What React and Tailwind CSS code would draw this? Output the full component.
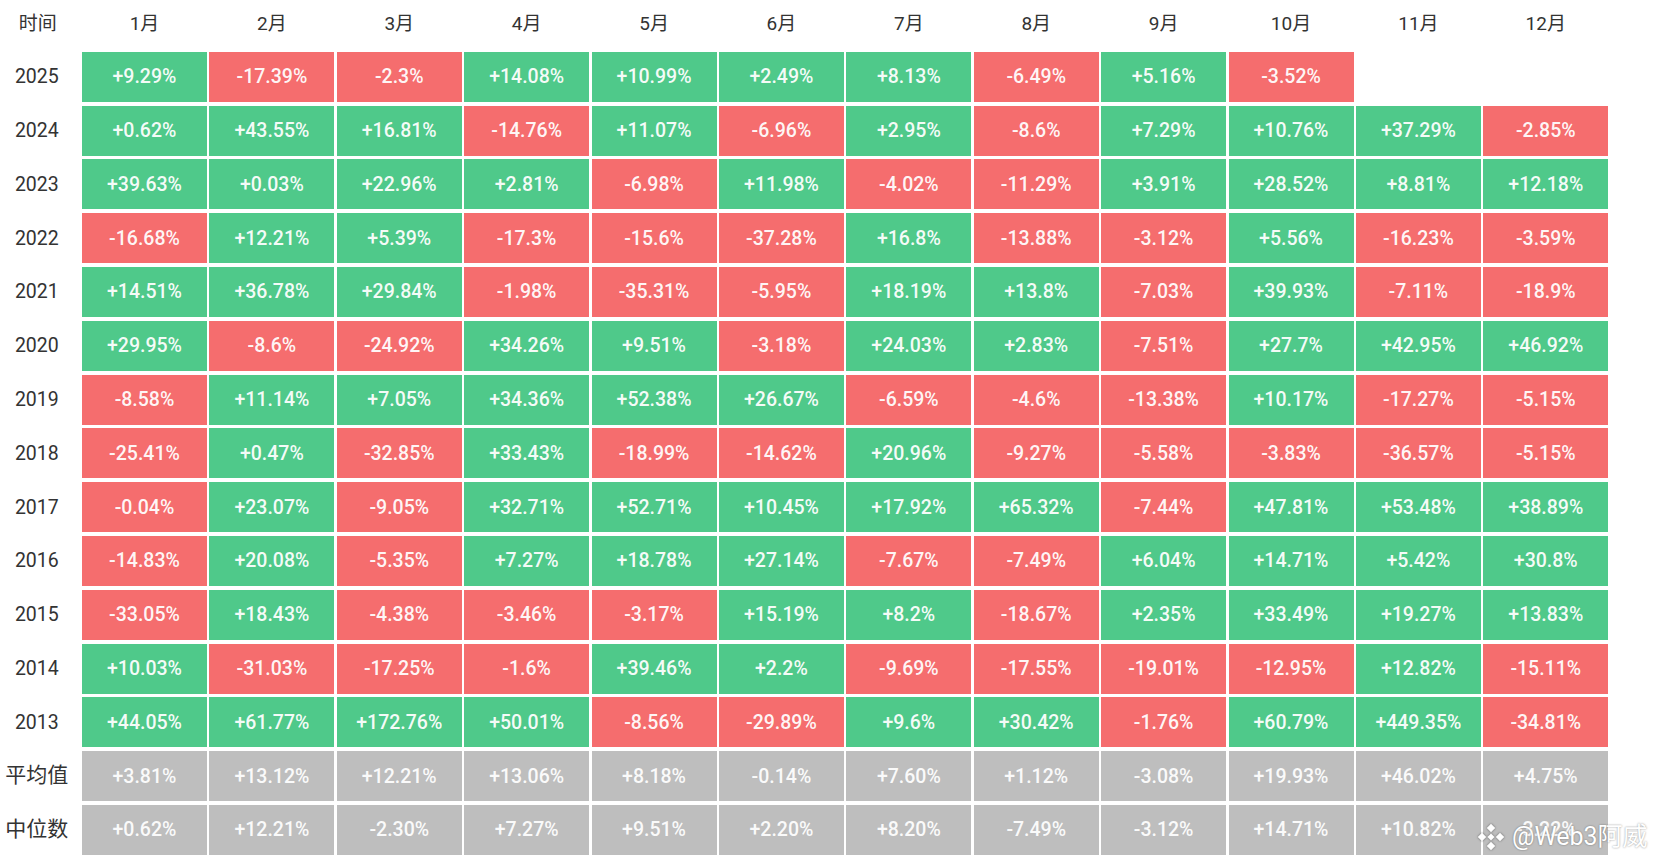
import React from "react";

const months = ["1月", "2月", "3月", "4月", "5月", "6月", "7月", "8月", "9月", "10月", "11月", "12月"];

const years = [
  ["2025", ["+9.29%", "-17.39%", "-2.3%", "+14.08%", "+10.99%", "+2.49%", "+8.13%", "-6.49%", "+5.16%", "-3.52%", "", ""]],
  ["2024", ["+0.62%", "+43.55%", "+16.81%", "-14.76%", "+11.07%", "-6.96%", "+2.95%", "-8.6%", "+7.29%", "+10.76%", "+37.29%", "-2.85%"]],
  ["2023", ["+39.63%", "+0.03%", "+22.96%", "+2.81%", "-6.98%", "+11.98%", "-4.02%", "-11.29%", "+3.91%", "+28.52%", "+8.81%", "+12.18%"]],
  ["2022", ["-16.68%", "+12.21%", "+5.39%", "-17.3%", "-15.6%", "-37.28%", "+16.8%", "-13.88%", "-3.12%", "+5.56%", "-16.23%", "-3.59%"]],
  ["2021", ["+14.51%", "+36.78%", "+29.84%", "-1.98%", "-35.31%", "-5.95%", "+18.19%", "+13.8%", "-7.03%", "+39.93%", "-7.11%", "-18.9%"]],
  ["2020", ["+29.95%", "-8.6%", "-24.92%", "+34.26%", "+9.51%", "-3.18%", "+24.03%", "+2.83%", "-7.51%", "+27.7%", "+42.95%", "+46.92%"]],
  ["2019", ["-8.58%", "+11.14%", "+7.05%", "+34.36%", "+52.38%", "+26.67%", "-6.59%", "-4.6%", "-13.38%", "+10.17%", "-17.27%", "-5.15%"]],
  ["2018", ["-25.41%", "+0.47%", "-32.85%", "+33.43%", "-18.99%", "-14.62%", "+20.96%", "-9.27%", "-5.58%", "-3.83%", "-36.57%", "-5.15%"]],
  ["2017", ["-0.04%", "+23.07%", "-9.05%", "+32.71%", "+52.71%", "+10.45%", "+17.92%", "+65.32%", "-7.44%", "+47.81%", "+53.48%", "+38.89%"]],
  ["2016", ["-14.83%", "+20.08%", "-5.35%", "+7.27%", "+18.78%", "+27.14%", "-7.67%", "-7.49%", "+6.04%", "+14.71%", "+5.42%", "+30.8%"]],
  ["2015", ["-33.05%", "+18.43%", "-4.38%", "-3.46%", "-3.17%", "+15.19%", "+8.2%", "-18.67%", "+2.35%", "+33.49%", "+19.27%", "+13.83%"]],
  ["2014", ["+10.03%", "-31.03%", "-17.25%", "-1.6%", "+39.46%", "+2.2%", "-9.69%", "-17.55%", "-19.01%", "-12.95%", "+12.82%", "-15.11%"]],
  ["2013", ["+44.05%", "+61.77%", "+172.76%", "+50.01%", "-8.56%", "-29.89%", "+9.6%", "+30.42%", "-1.76%", "+60.79%", "+449.35%", "-34.81%"]],
];

const stats = [
  ["平均值", ["+3.81%", "+13.12%", "+12.21%", "+13.06%", "+8.18%", "-0.14%", "+7.60%", "+1.12%", "-3.08%", "+19.93%", "+46.02%", "+4.75%"]],
  ["中位数", ["+0.62%", "+12.21%", "-2.30%", "+7.27%", "+9.51%", "+2.20%", "+8.20%", "-7.49%", "-3.12%", "+14.71%", "+10.82%", "-3.22%"]],
];

const font = "font-['Roboto','Noto_Sans_CJK_SC',sans-serif]";

function Cell({ value, gray }) {
  if (!value) return <div className="h-[50px]" />;
  const bg = gray ? "bg-[#bebebe]" : value.startsWith("-") ? "bg-[#f56d6e]" : "bg-[#4fc98a]";
  return (
    <div className={`h-[50px] flex items-center justify-center text-[19.5px] font-medium text-white/95 ${bg}`}>
      {value}
    </div>
  );
}

export default function App() {
  return (
    <div className={`relative w-[1654px] h-[861px] bg-white overflow-hidden ${font}`}>
      <div className="grid grid-cols-[79.6px_repeat(12,125px)] gap-x-[2.4px] gap-y-[3.8px]">
        <div className="h-[48px] flex items-center justify-center pr-[4px] text-[19px] text-[#333]">时间</div>
        {months.map((m) => (
          <div key={m} className="h-[48px] flex items-center justify-center text-[19px] text-[#333]">
            {m}
          </div>
        ))}
        {years.map(([label, vals]) => (
          <React.Fragment key={label}>
            <div className="h-[50px] flex items-center justify-center pr-[6px] text-[19.5px] text-[#333]">{label}</div>
            {vals.map((v, i) => (
              <Cell key={i} value={v} />
            ))}
          </React.Fragment>
        ))}
        {stats.map(([label, vals]) => (
          <React.Fragment key={label}>
            <div className="h-[50px] flex items-center justify-center pr-[6px] text-[21px] text-[#333]">{label}</div>
            {vals.map((v, i) => (
              <Cell key={i} value={v} gray />
            ))}
          </React.Fragment>
        ))}
      </div>

      {/* watermark */}
      <div className="absolute left-[1476px] top-[818px] flex items-center gap-[6px] text-white text-[25px] [text-shadow:0_0_2px_rgba(0,0,0,0.45)]">
        <svg width="30" height="30" viewBox="0 0 30 30" className="drop-shadow-[0_0_1px_rgba(0,0,0,0.5)]">
          <g fill="white">
            <rect x="12" y="3" width="6" height="6" transform="rotate(45 15 6)" />
            <rect x="12" y="21" width="6" height="6" transform="rotate(45 15 24)" />
            <rect x="3" y="12" width="6" height="6" transform="rotate(45 6 15)" />
            <rect x="21" y="12" width="6" height="6" transform="rotate(45 24 15)" />
            <rect x="12.5" y="12.5" width="5" height="5" transform="rotate(45 15 15)" />
          </g>
        </svg>
        <span>@Web3阿威</span>
      </div>
    </div>
  );
}
